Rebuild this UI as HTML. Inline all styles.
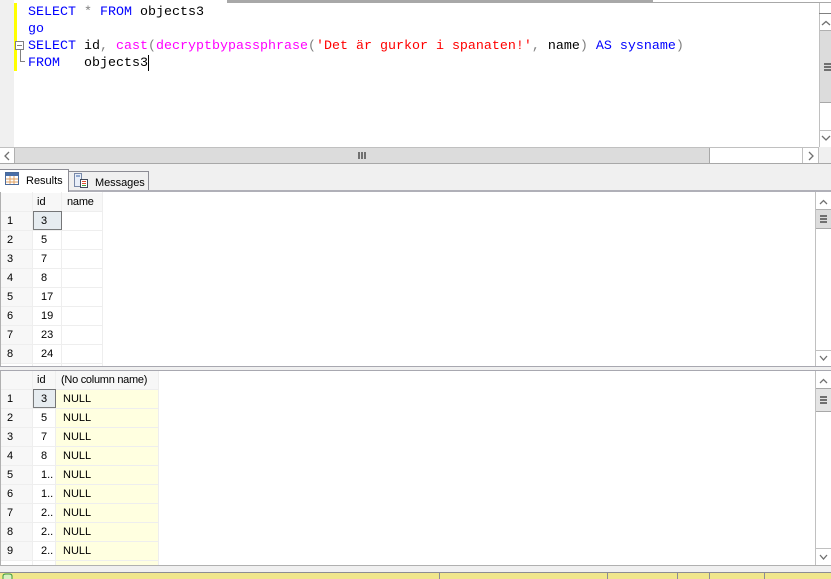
<!DOCTYPE html>
<html><head><meta charset="utf-8"><style>
html,body{margin:0;padding:0;background:#fff}
body{width:831px;height:579px;position:relative;overflow:hidden;font-family:"Liberation Sans",sans-serif}
.r{position:absolute}
.c{position:absolute;left:28px;font:13.33px/17px "Liberation Mono",monospace;white-space:pre;color:#000}
.b{color:#00f}.m{color:#f0f}.g{color:#808080}.s{color:#f00}
.t{position:absolute;font-size:11px;line-height:19px;color:#000;white-space:pre}
.w{position:absolute;left:0;top:1px;width:0;height:0}
</style></head><body>
<!-- top edge -->
<div class="r" style="left:227px;top:0;width:426px;height:3px;background:#a8a8a8"></div>
<div class="r" style="left:653px;top:2px;width:178px;height:1px;background:#a8a8a8"></div>
<div class="r" style="left:0;top:0;width:14px;height:147px;background:#f0f0f0"></div>
<div class="r" style="left:14px;top:3px;width:3px;height:68px;background:#ffff00"></div>
<!-- fold -->
<div class="r" style="left:15px;top:41px;width:7px;height:7px;border:1px solid #808080;background:#fff"></div>
<div class="r" style="left:17px;top:45px;width:5px;height:1px;background:#808080"></div>
<div class="r" style="left:20px;top:50px;width:1px;height:11px;background:#808080"></div>
<div class="r" style="left:20px;top:61px;width:5px;height:1px;background:#808080"></div>
<!-- code -->
<div class="c" style="top:4px"><span class="b">SELECT</span> <span class="g">*</span> <span class="b">FROM</span> objects3</div>
<div class="c" style="top:21px"><span class="b">go</span></div>
<div class="c" style="top:38px"><span class="b">SELECT</span> id<span class="g">,</span> <span class="m">cast</span><span class="g">(</span><span class="m">decryptbypassphrase</span><span class="g">(</span><span class="s">'Det är gurkor i spanaten!'</span><span class="g">,</span> name<span class="g">)</span> <span class="b">AS</span> <span class="b">sysname</span><span class="g">)</span></div>
<div class="c" style="top:55px"><span class="b">FROM</span>   objects3</div>
<div class="r" style="left:148px;top:55px;width:1px;height:16px;background:#000"></div>
<!-- editor vertical scrollbar -->
<div class="r" style="left:819px;top:3px;width:12px;height:144px;background:#fff;border-left:1px solid #c0c0c0;box-sizing:border-box"></div>
<div class="r" style="left:819px;top:13px;width:12px;height:1px;background:#808080"></div>
<div class="r" style="left:820px;top:30px;width:11px;height:1px;background:#b0b0b0"></div>
<div class="r" style="left:820px;top:31px;width:11px;height:72px;background:#dcdcdc;border-bottom:1px solid #a8a8a8;box-sizing:border-box"></div>
<div class="r" style="left:820px;top:130px;width:11px;height:1px;background:#c0c0c0"></div>
<div class="r" style="left:824px;top:63px;width:7px;height:2px;background:#707070"></div>
<div class="r" style="left:824px;top:66px;width:7px;height:2px;background:#707070"></div>
<div class="r" style="left:824px;top:69px;width:7px;height:2px;background:#707070"></div>
<svg class="r" style="left:820px;top:18px" width="11" height="10"><path d="M2 7L6 3.5L10 7" fill="none" stroke="#707070" stroke-width="1.3"/></svg>
<svg class="r" style="left:820px;top:133px" width="11" height="10"><path d="M2 3L6 7L10 3" fill="none" stroke="#707070" stroke-width="1.3"/></svg>
<!-- horizontal scrollbar -->
<div class="r" style="left:0;top:147px;width:819px;height:1px;background:#c0c0c0"></div>
<div class="r" style="left:819px;top:147px;width:12px;height:16px;background:#f0f0f0"></div>
<div class="r" style="left:14px;top:148px;width:696px;height:15px;background:#dcdcdc;border-left:1px solid #b0b0b0;border-right:1px solid #a8a8a8;box-sizing:border-box"></div>
<div class="r" style="left:802px;top:148px;width:1px;height:15px;background:#c0c0c0"></div>
<div class="r" style="left:818px;top:147px;width:1px;height:16px;background:#c0c0c0"></div>
<div class="r" style="left:358px;top:152px;width:2px;height:7px;background:#707070"></div>
<div class="r" style="left:361px;top:152px;width:2px;height:7px;background:#707070"></div>
<div class="r" style="left:364px;top:152px;width:2px;height:7px;background:#707070"></div>
<svg class="r" style="left:1px;top:150px" width="12" height="12"><path d="M8 2L4 6L8 10" fill="none" stroke="#707070" stroke-width="1.3"/></svg>
<svg class="r" style="left:805px;top:150px" width="12" height="12"><path d="M4 2L8 6L4 10" fill="none" stroke="#707070" stroke-width="1.3"/></svg>
<!-- tab strip -->
<div class="r" style="left:0;top:163px;width:831px;height:1px;background:#a8a8a8"></div>
<div class="r" style="left:0;top:164px;width:831px;height:26px;background:#f0f0f0"></div>
<div class="r" style="left:0;top:190px;width:831px;height:2px;background:#b0b0b8"></div>
<div class="r" style="left:68px;top:171px;width:81px;height:19px;background:#f0f0f0;border:1px solid #8c8c94;border-bottom:none;box-sizing:border-box"></div>
<div class="r" style="left:0;top:169px;width:69px;height:23px;background:#fff;border:1px solid #8c8c94;border-bottom:none;border-left:none;box-sizing:border-box"></div>
<svg class="r" style="left:5px;top:172px" width="15" height="14"><rect x=".5" y=".5" width="13" height="12" fill="#fff" stroke="#4a6a9a"/><rect x="1" y="1" width="12" height="3" fill="#4a6fa8"/><path d="M1 7H13M1 10H13M5 4V12M9 4V12" stroke="#e0a060" fill="none"/></svg>
<svg class="r" style="left:73px;top:172px" width="16" height="17"><rect x="1.5" y="1.5" width="7" height="13" fill="#e8eef8" stroke="#7888a8"/><rect x="7.5" y="7.5" width="7" height="8" fill="#fff" stroke="#404858"/><path d="M9 9.500h4M9 11.500h4" stroke="#e05030"/><path d="M9 13.500h4" stroke="#40a040"/><rect x="3" y="3" width="4" height="2" fill="#90a8d0"/></svg>
<div class="t" style="left:26px;top:172px">Results</div>
<div class="t" style="left:95px;top:174px;letter-spacing:-.05px">Messages</div>
<!-- grid 1 -->
<svg class="r" style="left:0;top:192px" width="110" height="174" shape-rendering="crispEdges">
<rect x="1" y="1" width="31" height="18" fill="#f7f7f7"/><rect x="33" y="1" width="28" height="18" fill="#f7f7f7"/><rect x="62" y="1" width="41" height="18" fill="#f7f7f7"/>
<g fill="#f7f7f7"><rect x="1" y="20" width="31" height="18"/><rect x="1" y="39" width="31" height="18"/><rect x="1" y="58" width="31" height="18"/><rect x="1" y="77" width="31" height="18"/><rect x="1" y="96" width="31" height="18"/><rect x="1" y="115" width="31" height="18"/><rect x="1" y="134" width="31" height="18"/><rect x="1" y="153" width="31" height="18"/></g>
<g stroke="#eeeeee" fill="none"><path d="M.5 38.500H103M.5 57.500H103M.5 76.500H103M.5 95.500H103M.5 114.500H103M.5 133.500H103M.5 152.500H103M.5 171.500H103M.5 19.500H103M32.500 0V174M61.500 0V174M102.500 0V174"/></g>
<rect x="33.500" y="19.500" width="28" height="18" fill="#e6ecf0" stroke="#000" stroke-dasharray="1 1"/>
<path d="M.5 0V174" stroke="#b0b0b0"/>
</svg>
<div class="t" style="left:37px;top:193px">id</div><div class="t" style="left:67px;top:193px;letter-spacing:-.2px">name</div>
<div class="w">
<div class="t" style="left:7px;top:211px">1</div><div class="t" style="left:41px;top:211px">3</div>
<div class="t" style="left:7px;top:230px">2</div><div class="t" style="left:41px;top:230px">5</div>
<div class="t" style="left:7px;top:249px">3</div><div class="t" style="left:41px;top:249px">7</div>
<div class="t" style="left:7px;top:268px">4</div><div class="t" style="left:41px;top:268px">8</div>
<div class="t" style="left:7px;top:287px">5</div><div class="t" style="left:41px;top:287px">17</div>
<div class="t" style="left:7px;top:306px">6</div><div class="t" style="left:41px;top:306px">19</div>
<div class="t" style="left:7px;top:325px">7</div><div class="t" style="left:41px;top:325px">23</div>
<div class="t" style="left:7px;top:344px">8</div><div class="t" style="left:41px;top:344px">24</div>
</div>
<!-- scrollbar grid 1 -->
<div class="r" style="left:815px;top:192px;width:1px;height:174px;background:#c0c0c0"></div>
<div class="r" style="left:816px;top:209px;width:15px;height:1px;background:#b0b0b0"></div>
<div class="r" style="left:816px;top:210px;width:15px;height:19px;background:#dcdcdc;border-bottom:1px solid #a8a8a8;box-sizing:border-box"></div>
<div class="r" style="left:816px;top:350px;width:15px;height:1px;background:#c0c0c0"></div>
<div class="r" style="left:820px;top:215px;width:7px;height:2px;background:#707070"></div>
<div class="r" style="left:820px;top:218px;width:7px;height:2px;background:#707070"></div>
<div class="r" style="left:820px;top:221px;width:7px;height:2px;background:#707070"></div>
<svg class="r" style="left:817px;top:197px" width="13" height="10"><path d="M3 7L6.500 3.500L10 7" fill="none" stroke="#707070" stroke-width="1.3"/></svg>
<svg class="r" style="left:817px;top:353px" width="13" height="10"><path d="M3 3L6.500 7L10 3" fill="none" stroke="#707070" stroke-width="1.3"/></svg>
<!-- splitter -->
<div class="r" style="left:0;top:366px;width:831px;height:1px;background:#a8a8b0"></div>
<div class="r" style="left:0;top:367px;width:831px;height:3px;background:#f0f0f0"></div>
<div class="r" style="left:0;top:370px;width:831px;height:1px;background:#a8a8b0"></div>
<!-- grid 2 -->
<svg class="r" style="left:0;top:371px" width="165" height="194" shape-rendering="crispEdges">
<rect x="1" y="0" width="31" height="18" fill="#f7f7f7"/><rect x="33" y="0" width="22" height="18" fill="#f7f7f7"/><rect x="56" y="0" width="103" height="18" fill="#f7f7f7"/>
<rect x="56" y="19" width="102" height="175" fill="#ffffe0"/>
<g fill="#f7f7f7"><rect x="1" y="19" width="31" height="18"/><rect x="1" y="38" width="31" height="18"/><rect x="1" y="57" width="31" height="18"/><rect x="1" y="76" width="31" height="18"/><rect x="1" y="95" width="31" height="18"/><rect x="1" y="114" width="31" height="18"/><rect x="1" y="133" width="31" height="18"/><rect x="1" y="152" width="31" height="18"/><rect x="1" y="171" width="31" height="18"/></g>
<g stroke="#eeeeee" fill="none"><path d="M.5 18.500H159M.5 37.500H159M.5 56.500H159M.5 75.500H159M.5 94.500H159M.5 113.500H159M.5 132.500H159M.5 151.500H159M.5 170.500H159M.5 189.500H159M32.500 0V194M55.500 0V194M158.500 0V194"/></g>
<rect x="33.500" y="18.500" width="22" height="18" fill="#e6ecf0" stroke="#000" stroke-dasharray="1 1"/>
<path d="M.5 0V194" stroke="#b0b0b0"/>
</svg>
<div class="t" style="left:37px;top:371px">id</div><div class="t" style="left:61px;top:371px;letter-spacing:-.27px">(No column name)</div>
<div class="w">
<div class="t" style="left:7px;top:389px">1</div><div class="t" style="left:41px;top:389px">3</div><div class="t" style="left:63px;top:389px">NULL</div>
<div class="t" style="left:7px;top:408px">2</div><div class="t" style="left:41px;top:408px">5</div><div class="t" style="left:63px;top:408px">NULL</div>
<div class="t" style="left:7px;top:427px">3</div><div class="t" style="left:41px;top:427px">7</div><div class="t" style="left:63px;top:427px">NULL</div>
<div class="t" style="left:7px;top:446px">4</div><div class="t" style="left:41px;top:446px">8</div><div class="t" style="left:63px;top:446px">NULL</div>
<div class="t" style="left:7px;top:465px">5</div><div class="t" style="left:41px;top:465px">1..</div><div class="t" style="left:63px;top:465px">NULL</div>
<div class="t" style="left:7px;top:484px">6</div><div class="t" style="left:41px;top:484px">1..</div><div class="t" style="left:63px;top:484px">NULL</div>
<div class="t" style="left:7px;top:503px">7</div><div class="t" style="left:41px;top:503px">2..</div><div class="t" style="left:63px;top:503px">NULL</div>
<div class="t" style="left:7px;top:522px">8</div><div class="t" style="left:41px;top:522px">2..</div><div class="t" style="left:63px;top:522px">NULL</div>
<div class="t" style="left:7px;top:541px">9</div><div class="t" style="left:41px;top:541px">2..</div><div class="t" style="left:63px;top:541px">NULL</div>
</div>
<!-- scrollbar grid 2 -->
<div class="r" style="left:815px;top:371px;width:1px;height:194px;background:#c0c0c0"></div>
<div class="r" style="left:816px;top:388px;width:15px;height:1px;background:#a8a8a8"></div>
<div class="r" style="left:816px;top:389px;width:15px;height:23px;background:#e4e4e4;border-bottom:1px solid #a8a8a8;box-sizing:border-box"></div>
<div class="r" style="left:820px;top:396px;width:7px;height:2px;background:#707070"></div>
<div class="r" style="left:820px;top:399px;width:7px;height:2px;background:#707070"></div>
<div class="r" style="left:820px;top:402px;width:7px;height:2px;background:#707070"></div>
<div class="r" style="left:816px;top:548px;width:15px;height:1px;background:#c0c0c0"></div>
<svg class="r" style="left:817px;top:376px" width="13" height="10"><path d="M3 7L6.500 3.500L10 7" fill="none" stroke="#707070" stroke-width="1.3"/></svg>
<svg class="r" style="left:817px;top:552px" width="13" height="10"><path d="M3 3L6.500 7L10 3" fill="none" stroke="#707070" stroke-width="1.3"/></svg>
<!-- bottom -->
<div class="r" style="left:0;top:565px;width:831px;height:1px;background:#b0b0b0"></div>
<div class="r" style="left:0;top:566px;width:831px;height:6px;background:#f0f0f0"></div>
<div class="r" style="left:0;top:572px;width:831px;height:7px;background:#f0e68c;border-top:1px solid #8c8c94;box-sizing:border-box"></div>
<div class="r" style="left:439px;top:573px;width:1px;height:6px;background:#8c8c94"></div>
<div class="r" style="left:607px;top:573px;width:1px;height:6px;background:#8c8c94"></div>
<div class="r" style="left:677px;top:573px;width:1px;height:6px;background:#8c8c94"></div>
<div class="r" style="left:709px;top:573px;width:1px;height:6px;background:#8c8c94"></div>
<div class="r" style="left:764px;top:573px;width:1px;height:6px;background:#8c8c94"></div>
<svg class="r" style="left:0;top:573px" width="14" height="6"><path d="M3 6V3Q3 1 6 1H9Q12 1 12 3V6" fill="#d8f0c0" stroke="#3a9a3a"/></svg>
</body></html>
